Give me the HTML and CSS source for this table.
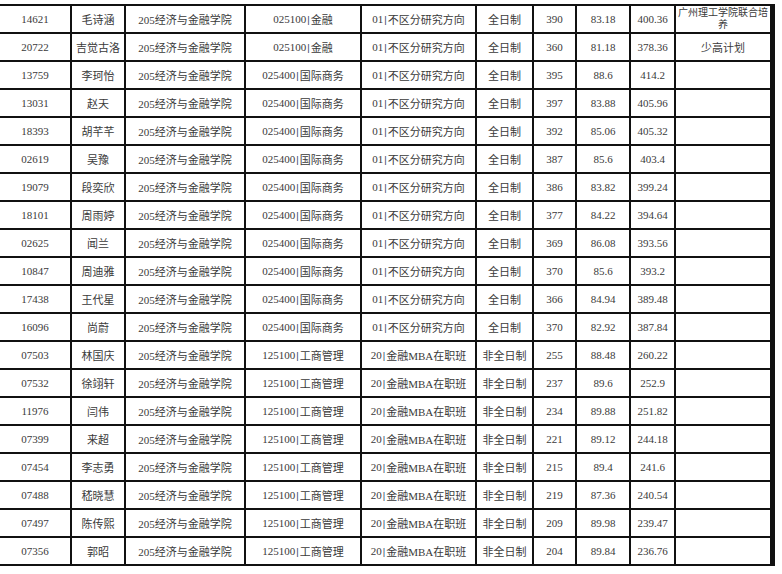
FILE: index.html
```html
<!DOCTYPE html>
<html lang="zh">
<head>
<meta charset="utf-8">
<link rel="stylesheet" href="styles.css">
</head>
<body>
<div class="sheet">
  <div class="grid">
    <div class="c">14621</div><div class="c">毛诗涵</div><div class="c">205经济与金融学院</div><div class="c">025100<span class="sep">|</span>金融</div><div class="c">01<span class="sep">|</span>不区分研究方向</div><div class="c">全日制</div><div class="c">390</div><div class="c">83.18</div><div class="c">400.36</div><div class="c note">广州理工学院联合培养</div>
    <div class="c">20722</div><div class="c">吉觉古洛</div><div class="c">205经济与金融学院</div><div class="c">025100<span class="sep">|</span>金融</div><div class="c">01<span class="sep">|</span>不区分研究方向</div><div class="c">全日制</div><div class="c">360</div><div class="c">81.18</div><div class="c">378.36</div><div class="c">少高计划</div>
    <div class="c">13759</div><div class="c">李珂怡</div><div class="c">205经济与金融学院</div><div class="c">025400<span class="sep">|</span>国际商务</div><div class="c">01<span class="sep">|</span>不区分研究方向</div><div class="c">全日制</div><div class="c">395</div><div class="c">88.6</div><div class="c">414.2</div><div class="c"></div>
    <div class="c">13031</div><div class="c">赵天</div><div class="c">205经济与金融学院</div><div class="c">025400<span class="sep">|</span>国际商务</div><div class="c">01<span class="sep">|</span>不区分研究方向</div><div class="c">全日制</div><div class="c">397</div><div class="c">83.88</div><div class="c">405.96</div><div class="c"></div>
    <div class="c">18393</div><div class="c">胡芊芊</div><div class="c">205经济与金融学院</div><div class="c">025400<span class="sep">|</span>国际商务</div><div class="c">01<span class="sep">|</span>不区分研究方向</div><div class="c">全日制</div><div class="c">392</div><div class="c">85.06</div><div class="c">405.32</div><div class="c"></div>
    <div class="c">02619</div><div class="c">吴豫</div><div class="c">205经济与金融学院</div><div class="c">025400<span class="sep">|</span>国际商务</div><div class="c">01<span class="sep">|</span>不区分研究方向</div><div class="c">全日制</div><div class="c">387</div><div class="c">85.6</div><div class="c">403.4</div><div class="c"></div>
    <div class="c">19079</div><div class="c">段奕欣</div><div class="c">205经济与金融学院</div><div class="c">025400<span class="sep">|</span>国际商务</div><div class="c">01<span class="sep">|</span>不区分研究方向</div><div class="c">全日制</div><div class="c">386</div><div class="c">83.82</div><div class="c">399.24</div><div class="c"></div>
    <div class="c">18101</div><div class="c">周雨婷</div><div class="c">205经济与金融学院</div><div class="c">025400<span class="sep">|</span>国际商务</div><div class="c">01<span class="sep">|</span>不区分研究方向</div><div class="c">全日制</div><div class="c">377</div><div class="c">84.22</div><div class="c">394.64</div><div class="c"></div>
    <div class="c">02625</div><div class="c">闻兰</div><div class="c">205经济与金融学院</div><div class="c">025400<span class="sep">|</span>国际商务</div><div class="c">01<span class="sep">|</span>不区分研究方向</div><div class="c">全日制</div><div class="c">369</div><div class="c">86.08</div><div class="c">393.56</div><div class="c"></div>
    <div class="c">10847</div><div class="c">周迪雅</div><div class="c">205经济与金融学院</div><div class="c">025400<span class="sep">|</span>国际商务</div><div class="c">01<span class="sep">|</span>不区分研究方向</div><div class="c">全日制</div><div class="c">370</div><div class="c">85.6</div><div class="c">393.2</div><div class="c"></div>
    <div class="c">17438</div><div class="c">王代星</div><div class="c">205经济与金融学院</div><div class="c">025400<span class="sep">|</span>国际商务</div><div class="c">01<span class="sep">|</span>不区分研究方向</div><div class="c">全日制</div><div class="c">366</div><div class="c">84.94</div><div class="c">389.48</div><div class="c"></div>
    <div class="c">16096</div><div class="c">尚蔚</div><div class="c">205经济与金融学院</div><div class="c">025400<span class="sep">|</span>国际商务</div><div class="c">01<span class="sep">|</span>不区分研究方向</div><div class="c">全日制</div><div class="c">370</div><div class="c">82.92</div><div class="c">387.84</div><div class="c"></div>
    <div class="c">07503</div><div class="c">林国庆</div><div class="c">205经济与金融学院</div><div class="c">125100<span class="sep">|</span>工商管理</div><div class="c">20<span class="sep">|</span>金融MBA在职班</div><div class="c">非全日制</div><div class="c">255</div><div class="c">88.48</div><div class="c">260.22</div><div class="c"></div>
    <div class="c">07532</div><div class="c">徐翊轩</div><div class="c">205经济与金融学院</div><div class="c">125100<span class="sep">|</span>工商管理</div><div class="c">20<span class="sep">|</span>金融MBA在职班</div><div class="c">非全日制</div><div class="c">237</div><div class="c">89.6</div><div class="c">252.9</div><div class="c"></div>
    <div class="c">11976</div><div class="c">闫伟</div><div class="c">205经济与金融学院</div><div class="c">125100<span class="sep">|</span>工商管理</div><div class="c">20<span class="sep">|</span>金融MBA在职班</div><div class="c">非全日制</div><div class="c">234</div><div class="c">89.88</div><div class="c">251.82</div><div class="c"></div>
    <div class="c">07399</div><div class="c">来超</div><div class="c">205经济与金融学院</div><div class="c">125100<span class="sep">|</span>工商管理</div><div class="c">20<span class="sep">|</span>金融MBA在职班</div><div class="c">非全日制</div><div class="c">221</div><div class="c">89.12</div><div class="c">244.18</div><div class="c"></div>
    <div class="c">07454</div><div class="c">李志勇</div><div class="c">205经济与金融学院</div><div class="c">125100<span class="sep">|</span>工商管理</div><div class="c">20<span class="sep">|</span>金融MBA在职班</div><div class="c">非全日制</div><div class="c">215</div><div class="c">89.4</div><div class="c">241.6</div><div class="c"></div>
    <div class="c">07488</div><div class="c">嵇晓慧</div><div class="c">205经济与金融学院</div><div class="c">125100<span class="sep">|</span>工商管理</div><div class="c">20<span class="sep">|</span>金融MBA在职班</div><div class="c">非全日制</div><div class="c">219</div><div class="c">87.36</div><div class="c">240.54</div><div class="c"></div>
    <div class="c">07497</div><div class="c">陈传熙</div><div class="c">205经济与金融学院</div><div class="c">125100<span class="sep">|</span>工商管理</div><div class="c">20<span class="sep">|</span>金融MBA在职班</div><div class="c">非全日制</div><div class="c">209</div><div class="c">89.98</div><div class="c">239.47</div><div class="c"></div>
    <div class="c">07356</div><div class="c">郭昭</div><div class="c">205经济与金融学院</div><div class="c">125100<span class="sep">|</span>工商管理</div><div class="c">20<span class="sep">|</span>金融MBA在职班</div><div class="c">非全日制</div><div class="c">204</div><div class="c">89.84</div><div class="c">236.76</div><div class="c"></div>
  </div>
</div>
</body>
</html>
```

FILE: styles.css
```css
html, body {
  margin: 0;
  padding: 0;
  background: #ffffff;
}

.sheet {
  padding-top: 4px;
  width: 782px;
}

.grid {
  display: grid;
  width: 775px;
  box-sizing: border-box;
  grid-template-columns: 70px 52px 118px 114px 113px 55px 41px 52px 43px 94px;
  grid-auto-rows: 26px;
  gap: 2px;
  padding: 2px 3px 2px 0;
  background: #111111;
}

.c {
  background: #ffffff;
  display: flex;
  align-items: center;
  justify-content: center;
  text-align: center;
  font-family: "Liberation Serif", "Noto Sans CJK SC", serif;
  font-size: 11px;
  color: #3a3a3a;
  white-space: nowrap;
  overflow: hidden;
}

.sep {
  color: #2c4260;
  font-weight: bold;
  margin: 0 1px;
}

.note {
  white-space: normal;
  font-size: 10px;
  line-height: 12px;
  padding: 0 1px;
  word-break: break-all;
}
```
